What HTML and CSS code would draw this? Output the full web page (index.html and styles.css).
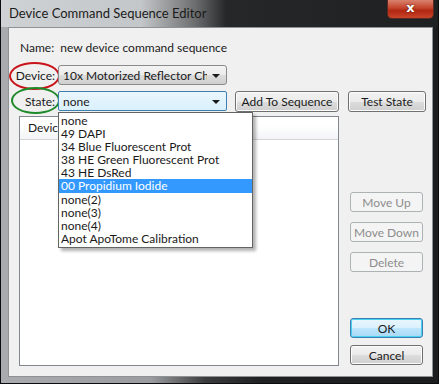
FILE: index.html
```html
<!DOCTYPE html>
<html lang="en">
<head>
    <meta charset="UTF-8">
    <title>Device Command Sequence Editor</title>
    <link rel="stylesheet" href="styles.css">
</head>
<body>

<div class="window">
    <div class="titlebar">
        <span class="title">Device Command Sequence Editor</span>
        <div class="close-btn">x</div>
    </div>

    <div class="client">
        <div class="name-row">
            <span class="label">Name:</span>
            <span class="name-value">new device command sequence</span>
        </div>

        <div class="field-row device-row">
            <span class="label ring ring-red">Device:</span>
            <div class="combo combo-device">
                <span class="combo-text">10x Motorized Reflector Changer</span>
                <span class="arrow"></span>
            </div>
        </div>

        <div class="field-row state-row">
            <span class="label ring ring-green">State:</span>
            <div class="combo-wrap">
                <div class="combo combo-state">
                    <span class="combo-text">none</span>
                    <span class="arrow"></span>
                </div>
                <ul class="dropdown">
                    <li>none</li>
                    <li>49 DAPI</li>
                    <li>34 Blue Fluorescent Prot</li>
                    <li>38 HE Green Fluorescent Prot</li>
                    <li>43 HE DsRed</li>
                    <li class="selected">00 Propidium Iodide</li>
                    <li>none(2)</li>
                    <li>none(3)</li>
                    <li>none(4)</li>
                    <li>Apot ApoTome Calibration</li>
                </ul>
            </div>
            <button class="btn btn-add">Add To Sequence</button>
            <button class="btn btn-test">Test State</button>
        </div>

        <div class="main">
            <div class="listview">
                <div class="lv-header">
                    <span class="lv-col">Device</span>
                </div>
            </div>
            <div class="side">
                <button class="btn side-btn btn-up" disabled>Move Up</button>
                <button class="btn side-btn" disabled>Move Down</button>
                <button class="btn side-btn" disabled>Delete</button>
                <button class="btn side-btn btn-default btn-ok">OK</button>
                <button class="btn side-btn btn-cancel">Cancel</button>
            </div>
        </div>
    </div>
</div>

</body>
</html>
```

FILE: styles.css
```css
body {
    margin: 0;
    background: #111;
    font-family: Lato, "Liberation Sans", sans-serif;
    font-size: 12px;
    color: #1a1a1a;
}
.window {
    width: 439px;
    height: 384px;
    box-sizing: border-box;
    border: 1px solid #0c0c0c;
    border-top: none;
    background: linear-gradient(90deg, #a9acae 0px, #9a9d9f 150px, #3a3b3c 205px, #202122 260px, #1c1d1e 100%);
    position: relative;
}
.titlebar {
    height: 27px;
    position: relative;
    background: linear-gradient(90deg, #cfd2d4 0px, #c4c7c9 140px, #6b6c6d 195px, #262728 225px, #1f2021 100%);
}
.title {
    position: absolute;
    left: 8px;
    top: 5px;
    font-size: 13px;
    color: #1b1b1b;
}
.close-btn {
    position: absolute;
    right: 4px;
    top: 0;
    width: 47px;
    height: 19px;
    box-sizing: border-box;
    border: 1px solid #5a2a22;
    border-top: none;
    border-radius: 0 0 5px 5px;
    background: linear-gradient(#d8826e 0%, #c74a32 40%, #b0270f 60%, #c7452a 100%);
    color: #fff;
    font-family: "DejaVu Sans", sans-serif;
    font-weight: bold;
    font-size: 13px;
    line-height: 15px;
    text-align: center;
    text-shadow: 0 0 2px #4a1208;
}
.client {
    margin-left: 7px;
    width: 425px;
    height: 350px;
    box-sizing: border-box;
    background: #f0f0f0;
    border: 1px solid #8f9294;
    padding: 12px 0 0 0;
}
.label {
    display: inline-block;
}
.name-row {
    padding-left: 11px;
    height: 16px;
    line-height: 16px;
}
.name-value {
    margin-left: 3px;
}
.field-row {
    display: flex;
    align-items: center;
    height: 22px;
}
.field-row .label {
    width: 46px;
    text-align: right;
    margin-right: 3px;
}
.device-row {
    margin-top: 8px;
}
.state-row {
    margin-top: 4px;
}
.ring {
    position: relative;
}
.ring::after {
    content: "";
    position: absolute;
    border-radius: 50%;
    border: 2px solid;
}
.ring-red::after {
    left: 0px;
    top: -6px;
    width: 47px;
    height: 24px;
    border-color: #c8141a;
}
.ring-green::after {
    left: 2px;
    top: -7px;
    width: 45px;
    height: 23px;
    border-color: #1f8a2a;
}
.combo {
    width: 169px;
    height: 20px;
    box-sizing: border-box;
    border-radius: 3px;
    display: flex;
    align-items: center;
    padding-left: 4px;
    position: relative;
}
.combo-text {
    white-space: nowrap;
    overflow: hidden;
    width: 144px;
}
.arrow {
    position: absolute;
    right: 6px;
    top: 8px;
    border-left: 4px solid transparent;
    border-right: 4px solid transparent;
    border-top: 4px solid #1a1a1a;
}
.combo-device {
    border: 1px solid #8a8a8a;
    background: linear-gradient(#f3f3f3 0%, #ebebeb 50%, #dddddd 51%, #cfcfcf 100%);
}
.combo-state {
    border: 1px solid #3c7fb1;
    background: linear-gradient(#eaf6fd, #d9f0fc);
    border-radius: 2px;
}
.combo-wrap {
    position: relative;
}
.dropdown {
    position: absolute;
    left: 0;
    top: 21px;
    width: 193px;
    margin: 0;
    padding: 1px 0 2px;
    list-style: none;
    background: #fff;
    border: 1px solid #646464;
    box-shadow: 3px 3px 3px rgba(0, 0, 0, 0.3);
    z-index: 2;
}
.dropdown li {
    height: 13.1px;
    line-height: 13px;
    padding-left: 2px;
    white-space: nowrap;
}
.dropdown li.selected {
    background: #3399ff;
    color: #fff;
}
.btn {
    font-family: inherit;
    font-size: 12px;
    color: #1a1a1a;
    height: 21px;
    padding: 0;
    border: 1px solid #707070;
    border-radius: 3px;
    background: linear-gradient(#f2f2f2 0%, #ebebeb 50%, #dddddd 51%, #cfcfcf 100%);
    box-shadow: inset 0 0 0 1px #fcfcfc;
}
.btn-add {
    margin-left: 8px;
    width: 104px;
}
.btn-test {
    margin-left: 9px;
    width: 78px;
}
.main {
    display: flex;
    margin-top: 4px;
    height: 250px;
}
.listview {
    margin-left: 10px;
    width: 320px;
    box-sizing: border-box;
    border: 1px solid #828790;
    background: #fff;
}
.lv-header {
    height: 22px;
    line-height: 22px;
    border-bottom: 1px solid #d5d5d5;
    background: linear-gradient(#ffffff 0%, #ffffff 40%, #f3f4f6 100%);
    padding-left: 8px;
}
.side {
    margin-left: 11px;
    display: flex;
    flex-direction: column;
    gap: 10px;
}
.side-btn {
    width: 73px;
    height: 20px;
}
.btn-up {
    margin-top: 76px;
}
.side-btn:disabled {
    color: #8d8d8d;
    border-color: #adb2b5;
    background: #f4f4f4;
    box-shadow: none;
}
.btn-ok {
    margin-top: auto;
}
.btn-cancel {
    margin-top: -3px;
    margin-bottom: 1px;
}
.btn-default {
    border-color: #3c7fb1;
    background: linear-gradient(#eaf6fd 0%, #d9f0fc 50%, #bee6fd 51%, #a7d9f5 100%);
    box-shadow: inset 0 0 0 1px #48d1f3;
}
```
